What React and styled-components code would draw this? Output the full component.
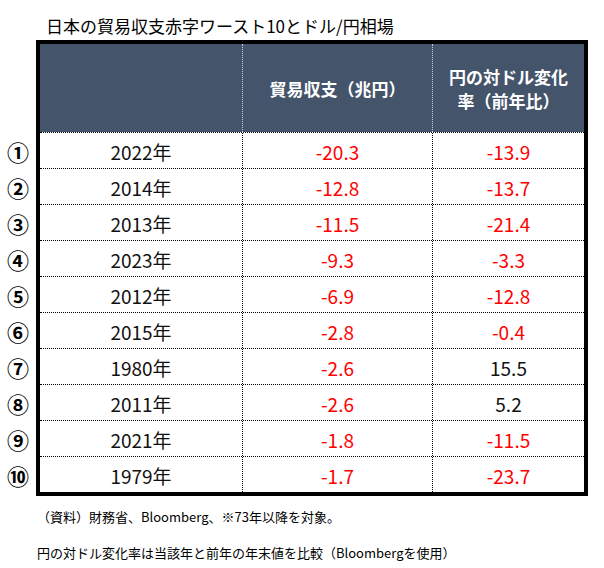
import React from "react";
import styled, { createGlobalStyle } from "styled-components";

const GlobalStyle = createGlobalStyle`
  html, body { margin: 0; padding: 0; background: #fff; }
  body {
    font-family: "Noto Sans CJK JP", "Noto Sans", sans-serif;
    color: #000;
  }
`;

const Page = styled.div`
  width: 604px;
  height: 568px;
  padding-top: 16px;
  box-sizing: border-box;
`;

const Title = styled.div`
  padding-left: 46px;
  font-size: 17px;
  line-height: 20px;
  height: 20px;
  color: #000;
`;

const Main = styled.div`
  display: flex;
  margin-top: 4px;
`;

const Markers = styled.div`
  width: 36px;
  display: flex;
  flex-direction: column;
  padding-top: 92px;
`;

const Marker = styled.div`
  height: 36px;
  display: flex;
  align-items: center;
  justify-content: center;
  font-size: 22px;
  font-weight: 700;
  padding-top: 1px;
  box-sizing: border-box;
  color: #000;
`;

const Table = styled.div`
  width: 552px;
  border: 4px solid #000;
  box-sizing: border-box;
`;

const COLS = "202px 190px 152px";

const HeaderRow = styled.div`
  display: grid;
  grid-template-columns: ${COLS};
  height: 88px;
  background: #44546a;
`;

const HeaderCell = styled.div`
  display: flex;
  align-items: center;
  justify-content: center;
  text-align: center;
  color: #fff;
  font-weight: bold;
  font-size: 17px;
  line-height: 24px;
  border-left: ${(p) => (p.$first ? "none" : "1px dotted #c8ccd4")};
  padding-top: 2px;
`;

const Row = styled.div`
  display: grid;
  grid-template-columns: ${COLS};
  height: 36px;
  box-sizing: border-box;
  border-top: 1px dotted #000;
`;

const Cell = styled.div`
  display: flex;
  align-items: center;
  justify-content: center;
  font-size: 19px;
  color: ${(p) => (p.$red ? "#ff0000" : "#111")};
  border-left: ${(p) => (p.$first ? "none" : "1px dotted #000")};
  padding-top: 1px;
`;

const Footer = styled.div`
  padding-left: 37px;
  margin-top: 11px;
  font-size: 13px;
  line-height: 20px;
  color: #000;
`;

const FooterLine = styled.div`
  margin-bottom: ${(p) => (p.$gap ? "16px" : "0")};
`;

const rows = [
  ["①", "2022年", "-20.3", "-13.9"],
  ["②", "2014年", "-12.8", "-13.7"],
  ["③", "2013年", "-11.5", "-21.4"],
  ["④", "2023年", "-9.3", "-3.3"],
  ["⑤", "2012年", "-6.9", "-12.8"],
  ["⑥", "2015年", "-2.8", "-0.4"],
  ["⑦", "1980年", "-2.6", "15.5"],
  ["⑧", "2011年", "-2.6", "5.2"],
  ["⑨", "2021年", "-1.8", "-11.5"],
  ["⑩", "1979年", "-1.7", "-23.7"],
];

const isNeg = (v) => v.startsWith("-");

export default function App() {
  return (
    <>
      <GlobalStyle />
      <Page>
        <Title>日本の貿易収支赤字ワースト10とドル/円相場</Title>
        <Main>
          <Markers>
            {rows.map((r) => (
              <Marker key={r[0]}>{r[0]}</Marker>
            ))}
          </Markers>
          <Table>
            <HeaderRow>
              <HeaderCell $first />
              <HeaderCell>貿易収支（兆円）</HeaderCell>
              <HeaderCell>
                円の対ドル変化
                <br />
                率（前年比）
              </HeaderCell>
            </HeaderRow>
            {rows.map((r) => (
              <Row key={r[0]}>
                <Cell $first>{r[1]}</Cell>
                <Cell $red={isNeg(r[2])}>{r[2]}</Cell>
                <Cell $red={isNeg(r[3])}>{r[3]}</Cell>
              </Row>
            ))}
          </Table>
        </Main>
        <Footer>
          <FooterLine $gap>（資料）財務省、Bloomberg、※73年以降を対象。</FooterLine>
          <FooterLine>円の対ドル変化率は当該年と前年の年末値を比較（Bloombergを使用）</FooterLine>
        </Footer>
      </Page>
    </>
  );
}
